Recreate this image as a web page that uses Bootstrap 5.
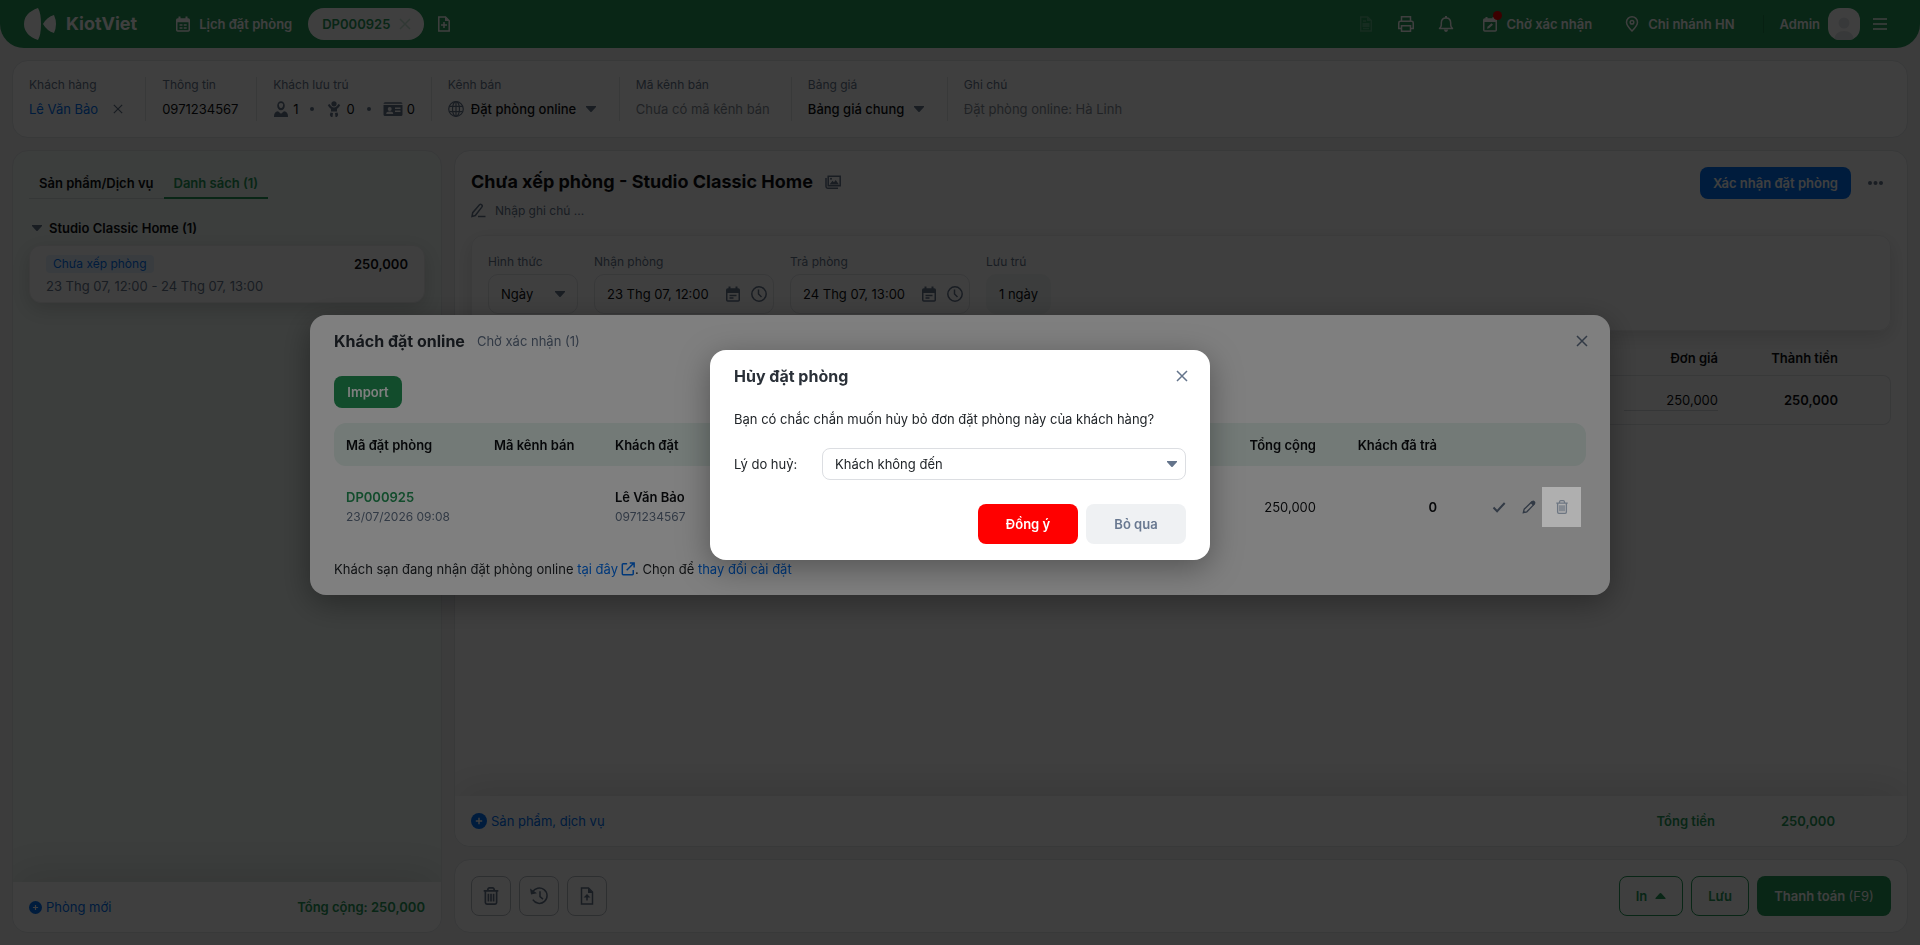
<!DOCTYPE html>
<html lang="vi">
<head>
<meta charset="utf-8">
<meta name="viewport" content="width=device-width, initial-scale=1">
<title>KiotViet - Lịch đặt phòng</title>
<link href="https://cdn.jsdelivr.net/npm/bootstrap@5.3.0/dist/css/bootstrap.min.css" rel="stylesheet">
<style>
:root{--kv-green:#249858;--kv-blue:#0070f4;--kv-gray:#64748b;--kv-line:#e2e4e7}
body{font-family:Inter,"Noto Sans",sans-serif;font-size:13px;line-height:20px;color:#0d0f12;background:#f0f1f2;min-height:100vh}
button,input,select{font:inherit;color:inherit}
svg{fill:none;stroke:currentColor;stroke-width:1.5;flex:none;display:block}
a{text-decoration:none;color:var(--kv-blue)}
.plain{border:0;background:none;padding:0}
.ic10{width:10px;height:10px}.ic12{width:12px;height:12px}.ic14{width:14px;height:14px}.ic16{width:16px;height:16px}.ic20{width:20px;height:20px}
.solid{fill:currentColor;stroke:none}
.semi{font-weight:600}.medium{font-weight:500}
.muted{color:var(--kv-gray)}
.small12{font-size:12px;line-height:16px}
.green{color:var(--kv-green)}
/* top bar */
.topbar{height:48px;background:var(--kv-green);border-radius:0 0 24px 24px;color:#fff;padding:0 32px 0 24px}
.brand-link{margin-right:34px}
.brand-word{font-size:18px;font-weight:700;color:#fff}
.pill{height:32px;border-radius:16px;background:#fff;color:var(--kv-green);padding:0 13px 0 14px;gap:9px}
.avatar{width:32px;height:32px;border-radius:12px;background:#fff;color:#e3e5e8;overflow:hidden}
.dot-alert{position:absolute;left:11px;top:-3px;width:9px;height:9px;border-radius:50%;background:#f00000}
.vline{width:1px;height:18px;background:#1c8048}
/* panels */
.board{padding:12px;gap:12px}
.gap12{gap:12px}
.panel{background:#fff;border:1px solid var(--kv-line);border-radius:16px;overflow:hidden}
.info-item{padding:0 16px;border-right:1px solid var(--kv-line);height:44px}
.info-item:last-child{border:0}
.info-phone{min-width:111px}
.info-item .val{height:24px;margin-top:4px}
.info-item label,.info-item .lbl{display:block;font-size:12px;line-height:16px;color:var(--kv-gray)}
.clear-x{margin:0 6px 0 15px}
.guests .muted{margin-right:4px}
.guests .dotsep{width:4px;height:4px;border-radius:50%;background:var(--kv-gray);margin:0 12px}
.pick{padding-right:7px;gap:7px}
.caret-select{appearance:none;border:0;background:transparent url("data:image/svg+xml,%3Csvg xmlns='http://www.w3.org/2000/svg' viewBox='0 0 10 6'%3E%3Cpath d='M0 0h10v1L5.700 5.700q-.7.600-1.400 0L0 1z' fill='%2364748b'/%3E%3C/svg%3E") no-repeat right center/10px 6px;padding:0 19px 0 0}
.ghost-input{border:0;background:none;padding:0;outline:0}
.ghost-input::placeholder{color:#828b96;opacity:1}
.channel-code{width:139px}
.side{flex:0 0 430px;background:#f1f9f5}
.side-tabs button{height:32px;padding:1px 10px 0;border-bottom:1px solid #d7dcdc;font-weight:600}
.side-tabs button.active{border-bottom:2px solid var(--kv-green);color:var(--kv-green);padding-top:2px}
.group-head{margin:19px 0 7px;gap:7px;padding-left:3px}
.room-card{background:#fff;border:1px solid #eceeef;border-radius:12px;padding:8px 16px;box-shadow:0 6px 20px rgba(0,0,0,.16)}
.room-tag{background:#e6f1fe;color:var(--kv-blue);border-radius:4px;font-size:12px;line-height:18px;padding:0 7px}
.foot{height:50px;background:#fff;box-shadow:0 -10px 40px rgba(0,0,0,.12)}
.foot-sum{padding-right:72px}
.sum-value{width:120px;text-align:right}
.kbtn{border-radius:8px;font-weight:600;line-height:20px;padding:0 12px;height:32px;display:inline-flex;align-items:center;justify-content:center;border:1px solid transparent}
.kbtn-lg{height:40px}
.kbtn-blue{background:var(--kv-blue);color:#fff}
.kbtn-green{background:var(--kv-green);color:#fff}
.kbtn-line{background:#fff;color:var(--kv-green);border-color:var(--kv-green)}
.kbtn-icon{width:40px;padding:0;border-color:#b7bcc3;color:var(--kv-gray);background:#fff}
.w-print{width:64px;gap:8px}.w-save{width:58px}.w-pay{width:134px}.w-import{width:68px}
.page-title{font-size:18px;line-height:28px;font-weight:700;margin:0}
.title-row{padding-top:1px}
.note-row{height:24px;gap:8px;margin-top:3px}
.stay-card{border:1px solid #eceeef;border-radius:12px;padding:16px;gap:16px;margin-top:12px;box-shadow:0 6px 20px rgba(0,0,0,.14)}
.stay-card .cap{display:block;font-size:12px;line-height:16px;color:var(--kv-gray);padding-top:2px;margin-bottom:4px}
.field{height:40px;border:1px solid var(--kv-line);border-radius:10px;padding:0 12px}
.field.dated{padding-right:6px}
.field.dated .ghost-input{width:118px}
.field.dated .plain + .plain{margin-left:10px}
.field .caret-select{width:64px}
.nights{background:#f2f6f4;border-color:#f2f6f4}
.lines{border-collapse:separate;border-spacing:0;width:100%;margin-top:12px}
.lines th{height:32px;font-weight:600;padding:0 16px 2px;text-align:right}
.lines td{height:50px;padding:0 16px;text-align:right;border:solid var(--kv-line);border-width:1px 0}
.lines td:first-child{border-left-width:1px;border-radius:8px 0 0 8px}
.lines td:last-child{border-right-width:1px;border-radius:0 8px 8px 0}
.col-price{width:126px}.col-total{width:120px}.col-end{width:37px}
.price-in{width:94px;text-align:right;border:0;border-bottom:1px solid #d5d8dc;background:none;padding:0}
/* dialogs */
.modal{display:block;padding-bottom:36px}
.modal-backdrop{--bs-backdrop-opacity:.5}
.modal-content{border:0;border-radius:16px;color:#212529;box-shadow:0 8px 32px rgba(0,0,0,.35)}
.dlg-wide{max-width:1300px}
.dlg-head{height:52px;gap:12px}
.dlg-head .plain{margin:0 -2px 0 auto;color:var(--kv-gray)}
.dlg-title{font-size:16px;line-height:24px;font-weight:700;margin:0;color:#2a3038}
.toolbar-row{margin:9px 0 15px}
.bookings{width:100%;border-collapse:separate;border-spacing:0;table-layout:fixed;color:#0d0f12}
.bookings th{height:43px;background:#e6f4ee;font-weight:600;padding:2px 12px 0}
.bookings th:first-child{border-radius:12px 0 0 12px}
.bookings th:last-child{border-radius:0 12px 12px 0}
.bookings td{height:82px;padding:0 12px;vertical-align:middle}
.bookings td.acts{padding:0 5px 0 0}
.bookings .sub{font-size:12px;line-height:20px;color:var(--kv-gray)}
.c-code{width:148px}.c-chan{width:121px}.c-sum{width:120px}.c-paid{width:121px}.c-act{width:137px}
.act{display:flex;align-items:center;justify-content:center;color:var(--kv-gray);width:26px;height:40px}
.act-focus{position:relative;z-index:1051;width:39px;background:#afafaf;color:#6d7682}
.hint{height:20px;margin:11px 0 16px;white-space:pre}
.hint .out{gap:3px}
.ask{margin:7px 0 19px}
.reason{flex:1;height:32px;border:1px solid #dcdee2;border-radius:8px;padding-left:12px;background-position:right 8px center;color:#212529}
.reason-label{width:88px}
.dlg-foot{margin:24px 0 16px}
.kbtn-red{background:#f00;color:#fff;width:100px}
.kbtn-soft{background:#eff1f3;color:#687890;width:100px}
</style>
</head>
<body class="d-flex flex-column modal-open">

<svg class="d-none" aria-hidden="true">
  <symbol id="i-x" viewBox="0 0 12 12"><path d="M1 1l10 10M11 1L1 11"/></symbol>
  <symbol id="i-cal" viewBox="0 0 16 16"><rect x="1.750" y="3" width="12.500" height="12" rx="1"/><path d="M2 3h12v3.200H2zM3.500.5h2V4h-2zM10.500.5h2V4h-2z" class="solid"/><path d="M4.500 9h3M8.700 9h3M4.500 12h3M8.700 12h3"/></symbol>
  <symbol id="i-caldate" viewBox="0 0 16 16"><rect x="1.750" y="3" width="12.500" height="12" rx="1"/><path d="M2 3h12v4H2zM3.500.5h2V4h-2zM10.500.5h2V4h-2z" class="solid"/><path d="M4.500 9.500h7M4.500 12h4"/></symbol>
  <symbol id="i-calpen" viewBox="0 0 16 16"><rect x="1.750" y="3" width="12.500" height="12" rx="1"/><path d="M2 3h12v3H2zM3.500 1h2v3h-2zM10.500 1h2v3h-2z" class="solid"/><path d="M5 12.800l.5-2 4-3.500L11 8.800l-4 3.500z" class="solid"/></symbol>
  <symbol id="i-fileplus" viewBox="0 0 16 16"><path d="M3 1h6.500L13.200 4.700V15H2.800V1zM8 6v6M5 9h6"/><path d="M9 1v4h4z" class="solid"/></symbol>
  <symbol id="i-fileup" viewBox="0 0 20 20"><path d="M4.500 2h7l4 4v12h-11zM10 14.500V10"/><path d="M11 2v5h5zM6.500 11.500L10 8l3.500 3.500z" class="solid"/></symbol>
  <symbol id="i-doc" viewBox="0 0 16 16"><path d="M2.700 1h7l3.600 3.600V15H2.700zM5 5h3M5 12.500h6"/><path d="M9 1v4h4zM4.500 7h7v4h-7z" class="solid"/></symbol>
  <symbol id="i-print" viewBox="0 0 16 16"><path d="M3.500 5V.75h9V5M3.500 12.500H.75V7q0-1.700 1.700-1.700h11.100q1.700 0 1.700 1.700v5.500H12.500M3.500 9.800h9v5.450h-9z"/></symbol>
  <symbol id="i-bell" viewBox="0 0 16 16"><path d="M1.500 12.500q1.800-1.700 1.800-3.500V7Q3.300 2 8 2t4.700 5v2q0 1.800 1.800 3.500z" stroke-linejoin="round"/><path d="M7 0h2v2H7zM5.800 13.500h4.400Q9.500 16 8 16t-2.200-2.500z" class="solid"/></symbol>
  <symbol id="i-pin" viewBox="0 0 16 16"><path d="M8 15Q2.500 9.500 2.500 6.200a5.500 5.400 0 0111 0Q13.500 9.500 8 15z"/><circle cx="8" cy="6.200" r="1.800"/></symbol>
  <symbol id="i-person" viewBox="0 0 16 16"><path d="M8 .2a3.700 4.400 0 100 9 3.700 4.400 0 000-9zm0 1.800q2 0 2.200 1.500l-.4 2Q9.300 7 8 7T6.200 5.500L5.800 3.500Q6 2 8 2z" fill-rule="evenodd" class="solid"/><path d="M1 16q-.3-5 4-5.700L8 12.800l3-2.500q4.300.7 4 5.700z" class="solid"/></symbol>
  <symbol id="i-baby" viewBox="0 0 16 16"><circle cx="8" cy="2.800" r="2.600" class="solid"/><path d="M2.700 3.500q2 4 5.300 4t5.300-4" stroke-width="2.200"/><path d="M5 7h6v3.500H5zM4.500 11.500L7 12l-.5 4H5q-2-2.200-.5-4.500zM11.500 11.500L9 12l.5 4H11q2-2.200.5-4.500z" class="solid"/></symbol>
  <symbol id="i-id" viewBox="0 0 20 16"><path d="M2 1.200h16q1.500 0 1.500 1.500H.5Q.5 1.200 2 1.200zM.5 4h19v9.500q0 1.500-1.500 1.500H2Q.5 15 .5 13.500zm6.200 2a2 2 0 100 4 2 2 0 000-4zM3.200 13h7q0-2.400-3.500-2.400T3.200 13zM12 6.500V8h5.500V6.500zm0 3V11h5.500V9.500z" fill-rule="evenodd" class="solid"/></symbol>
  <symbol id="i-globe" viewBox="0 0 16 16"><g stroke-width="1.200"><circle cx="8" cy="8" r="7.300"/><ellipse cx="8" cy="8" rx="3.500" ry="7.300"/><path d="M1.500 5.300h13M1.500 10.700h13M8 .7v14.600"/></g></symbol>
  <symbol id="i-caret" viewBox="0 0 10 6"><path d="M0 0h10v1L5.700 5.700q-.7.600-1.400 0L0 1z" class="solid"/></symbol>
  <symbol id="i-plus" viewBox="0 0 16 16"><circle cx="8" cy="8" r="8" class="solid"/><path d="M8 4.800v6.400M4.800 8h6.400" stroke="#fff"/></symbol>
  <symbol id="i-images" viewBox="0 0 16 16"><path d="M3.200 2.200h12v9.600h-12zM1 4v8.500q0 1.700 1.700 1.700H13"/><path d="M4.500 10.500l3-3.700 1.500 1.500 1.700-2.300 3.300 4.500z" class="solid"/><circle cx="6" cy="4.800" r="1" class="solid"/></symbol>
  <symbol id="i-note" viewBox="0 0 16 16"><path d="M1 13.500l.7-3.800L8.500 1.800q1-1 2.200 0t.1 2.300L4.300 12.500z"/><path d="M7 13.500h7.500"/></symbol>
  <symbol id="i-clock" viewBox="0 0 16 16"><circle cx="8" cy="8" r="7.200"/><path d="M7.500 3.500V8l3 3"/></symbol>
  <symbol id="i-trash" viewBox="0 0 16 16"><path d="M1.500 3.500h13M3 3.500v10.300q0 1.400 1.400 1.400h7.200q1.400 0 1.400-1.400V3.500M5 3q.4-2.200 1.500-2.200h3Q10.600.8 11 3M5.700 6v6.800M8 6v6.800M10.300 6v6.800"/></symbol>
  <symbol id="i-history" viewBox="0 0 20 20"><path d="M3.500 6.200a7.700 7.700 0 1 1 .3 7.500M11 5.200v5.500l3 2.500"/><path d="M1 2.500l1 6 6-1.300z" class="solid"/></symbol>
  <symbol id="i-check" viewBox="0 0 14 14"><path d="M1.500 7.500l3.600 3.700L12.700 3" stroke-width="2"/></symbol>
  <symbol id="i-pencil" viewBox="0 0 16 16"><path d="M1.500 14.500l1-4 8.500-8.300 2.800 2.800-8.300 8.500z"/><path d="M9.500 3L12 .8q1.300-.6 2.500.7t.7 2.500L12.800 6.500zM1 15l.7-3 2.300 2.300z" class="solid"/></symbol>
  <symbol id="i-ext" viewBox="0 0 16 16"><path d="M7 2H2.500Q1.500 2 1.500 3v10.500q0 1 1 1H13q1 0 1-1V9M6.500 9.500L14.500 1.500M10 1.200h5v5" stroke-width="1.700"/></symbol>
</svg>

<header class="topbar d-flex align-items-center">
  <a href="#" class="brand-link d-flex align-items-center gap-2" aria-label="KiotViet">
    <svg class="text-white" width="34" height="32" viewBox="0 0 34 32"><path class="solid" d="M14 0q3 5 3 16t-3 16Q0 27 0 16T14 0zM30 7q-7 2-11 9 4 7 11 9 4-9 0-18z"/></svg>
    <span class="brand-word">KiotViet</span>
  </a>
  <a href="#" class="d-flex align-items-center gap-2 semi text-white"><svg class="ic16 ms-1"><use href="#i-cal"/></svg>Lịch đặt phòng</a>
  <div class="pill d-flex align-items-center semi ms-3"><span>DP000925</span><button class="plain opacity-25" aria-label="Đóng phiếu"><svg class="ic12"><use href="#i-x"/></svg></button></div>
  <button class="plain ms-2 ps-1" aria-label="Thêm phiếu"><svg class="ic16"><use href="#i-fileplus"/></svg></button>

  <div class="d-flex align-items-center ms-auto">
    <button class="plain me-4 opacity-25" aria-label="Chứng từ"><svg class="ic16"><use href="#i-doc"/></svg></button>
    <button class="plain me-4" aria-label="In"><svg class="ic16"><use href="#i-print"/></svg></button>
    <button class="plain me-4" aria-label="Thông báo"><svg class="ic16"><use href="#i-bell"/></svg></button>
    <button class="plain d-flex align-items-center gap-2 semi ms-1 me-4 position-relative"><svg class="ic16"><use href="#i-calpen"/></svg>Chờ xác nhận<span class="dot-alert"></span></button>
    <button class="plain d-flex align-items-center gap-2 semi ms-2 me-4"><svg class="ic16"><use href="#i-pin"/></svg>Chi nhánh HN</button>
    <span class="vline me-3 ms-1"></span>
    <span class="semi me-2">Admin</span>
    <span class="avatar"><svg width="32" height="32" viewBox="0 0 32 32"><circle cx="16" cy="15" r="5.500" class="solid"/><path d="M6 32q1-9 10-9t10 9z" class="solid"/></svg></span>
    <button class="plain ms-2 ps-1" aria-label="Menu"><svg class="ic16" viewBox="0 0 16 16"><path d="M1 3h14M1 8h14M1 13h14"/></svg></button>
  </div>
</header>

<main class="board d-flex flex-column flex-grow-1">
  <section class="panel d-flex py-3">
    <div class="info-item"><span class="lbl">Khách hàng</span>
      <div class="val d-flex align-items-center"><a href="#">Lê Văn Bảo</a><button class="plain muted clear-x" aria-label="Bỏ khách hàng"><svg class="ic10"><use href="#i-x"/></svg></button></div></div>
    <div class="info-item info-phone"><span class="lbl">Thông tin</span><div class="val d-flex align-items-center">0971234567</div></div>
    <div class="info-item"><span class="lbl">Khách lưu trú</span>
      <div class="val guests d-flex align-items-center"><svg class="ic16 muted"><use href="#i-person"/></svg>1<span class="dotsep"></span><svg class="ic16 muted"><use href="#i-baby"/></svg>0<span class="dotsep"></span><svg width="20" height="16" class="muted"><use href="#i-id"/></svg>0</div></div>
    <div class="info-item"><label for="channel">Kênh bán</label>
      <div class="val pick d-flex align-items-center"><svg class="ic16 muted"><use href="#i-globe"/></svg><select id="channel" class="caret-select medium"><option>Đặt phòng online</option></select></div></div>
    <div class="info-item"><label for="chcode">Mã kênh bán</label>
      <div class="val d-flex align-items-center"><input id="chcode" class="ghost-input channel-code" placeholder="Chưa có mã kênh bán"></div></div>
    <div class="info-item"><label for="pricebook">Bảng giá</label>
      <div class="val pick d-flex align-items-center"><select id="pricebook" class="caret-select medium"><option>Bảng giá chung</option></select></div></div>
    <div class="info-item flex-grow-1"><label for="note">Ghi chú</label>
      <div class="val d-flex align-items-center"><input id="note" class="ghost-input w-100" placeholder="Đặt phòng online: Hà Linh"></div></div>
  </section>

  <div class="d-flex flex-grow-1 gap12">
    <aside class="panel side d-flex flex-column">
      <div class="p-3 flex-grow-1">
        <div class="side-tabs d-flex"><button class="border-top-0 border-start-0 border-end-0 bg-transparent">Sản phẩm/Dịch vụ</button><button class="active border-top-0 border-start-0 border-end-0 bg-transparent">Danh sách (1)</button></div>
        <div class="group-head d-flex align-items-center semi"><svg width="10" height="6" class="muted"><use href="#i-caret"/></svg>Studio Classic Home (1)</div>
        <div class="room-card">
          <div class="d-flex justify-content-between align-items-center"><span class="room-tag">Chưa xếp phòng</span><span class="semi">250,000</span></div>
          <div class="muted mt-1 lh-sm">23 Thg 07, 12:00 - 24 Thg 07, 13:00</div>
        </div>
      </div>
      <div class="foot d-flex align-items-center px-3">
        <a href="#" class="d-flex align-items-center gap-1"><svg width="13" height="13"><use href="#i-plus"/></svg>Phòng mới</a>
        <span class="ms-auto semi green">Tổng cộng: 250,000</span>
      </div>
    </aside>

    <div class="d-flex flex-column flex-grow-1 gap12">
      <section class="panel d-flex flex-column flex-grow-1">
        <div class="p-3 pb-0 flex-grow-1">
          <div class="d-flex">
            <div class="flex-grow-1">
              <div class="title-row d-flex align-items-center gap12"><h1 class="page-title">Chưa xếp phòng - Studio Classic Home</h1><svg class="ic16 muted"><use href="#i-images"/></svg></div>
              <div class="note-row d-flex align-items-center muted"><svg class="ic16"><use href="#i-note"/></svg><span class="small12">Nhập ghi chú ...</span></div>
            </div>
            <div class="d-flex align-items-center align-self-start">
              <button class="kbtn kbtn-blue">Xác nhận đặt phòng</button>
              <button class="plain muted ms-3 me-2" aria-label="Thêm"><svg class="ic16" viewBox="0 0 16 16"><g class="solid"><circle cx="3" cy="8" r="2"/><circle cx="8.500" cy="8" r="2"/><circle cx="14" cy="8" r="2"/></g></svg></button>
            </div>
          </div>
          <div class="stay-card d-flex">
            <div><label for="mode" class="cap">Hình thức</label><div class="field d-flex align-items-center"><select id="mode" class="caret-select"><option>Ngày</option></select></div></div>
            <div><label for="cin" class="cap">Nhận phòng</label><div class="field dated d-flex align-items-center"><input id="cin" class="ghost-input" value="23 Thg 07, 12:00"><button class="plain muted" aria-label="Chọn ngày"><svg class="ic16"><use href="#i-caldate"/></svg></button><button class="plain muted" aria-label="Chọn giờ"><svg class="ic16"><use href="#i-clock"/></svg></button></div></div>
            <div><label for="cout" class="cap">Trả phòng</label><div class="field dated d-flex align-items-center"><input id="cout" class="ghost-input" value="24 Thg 07, 13:00"><button class="plain muted" aria-label="Chọn ngày"><svg class="ic16"><use href="#i-caldate"/></svg></button><button class="plain muted" aria-label="Chọn giờ"><svg class="ic16"><use href="#i-clock"/></svg></button></div></div>
            <div><div class="cap">Lưu trú</div><div class="field nights d-flex align-items-center">1 ngày</div></div>
          </div>
          <table class="lines">
            <colgroup><col><col class="col-price"><col class="col-total"><col class="col-end"></colgroup>
            <thead><tr><th></th><th>Đơn giá</th><th>Thành tiền</th><th></th></tr></thead>
            <tbody><tr><td></td><td><input class="price-in" aria-label="Đơn giá" value="250,000"></td><td class="semi">250,000</td><td></td></tr></tbody>
          </table>
        </div>
        <div class="foot foot-sum d-flex align-items-center ps-3">
          <a href="#" class="d-flex align-items-center gap-1"><svg class="ic16"><use href="#i-plus"/></svg>Sản phẩm, dịch vụ</a>
          <span class="ms-auto semi green">Tổng tiền</span><span class="semi green sum-value">250,000</span>
        </div>
      </section>
      <section class="panel d-flex p-3 gap-2">
        <button class="kbtn kbtn-lg kbtn-icon" aria-label="Xóa"><svg width="18" height="18"><use href="#i-trash"/></svg></button>
        <button class="kbtn kbtn-lg kbtn-icon" aria-label="Lịch sử"><svg class="ic20"><use href="#i-history"/></svg></button>
        <button class="kbtn kbtn-lg kbtn-icon" aria-label="Tải lên"><svg class="ic20"><use href="#i-fileup"/></svg></button>
        <button class="kbtn kbtn-lg kbtn-line w-print ms-auto">In<svg width="11" height="6" viewBox="0 0 10 6"><path d="M0 6h10V5L5.700.3Q5-.3 4.300.3L0 5z" class="solid"/></svg></button>
        <button class="kbtn kbtn-lg kbtn-line w-save">Lưu</button>
        <button class="kbtn kbtn-lg kbtn-green w-pay">Thanh toán&nbsp;<span class="fw-normal">(F9)</span></button>
      </section>
    </div>
  </div>
</main>

<div class="modal-backdrop show"></div>
<div class="modal show" role="dialog" aria-labelledby="t1">
  <div class="modal-dialog modal-dialog-centered dlg-wide">
    <div class="modal-content px-4">
      <div class="dlg-head d-flex align-items-center"><h2 class="dlg-title" id="t1">Khách đặt online</h2><span class="muted">Chờ xác nhận (1)</span><button class="plain" aria-label="Đóng"><svg class="ic12"><use href="#i-x"/></svg></button></div>
      <div class="toolbar-row"><button class="kbtn kbtn-green w-import">Import</button></div>
      <table class="bookings">
        <colgroup><col class="c-code"><col class="c-chan"><col><col class="c-sum"><col class="c-paid"><col class="c-act"></colgroup>
        <thead><tr><th>Mã đặt phòng</th><th>Mã kênh bán</th><th>Khách đặt</th><th class="text-end">Tổng cộng</th><th class="text-end">Khách đã trả</th><th></th></tr></thead>
        <tbody><tr>
          <td><a href="#" class="semi green">DP000925</a><div class="sub">23/07/2026 09:08</div></td>
          <td></td>
          <td><div class="semi">Lê Văn Bảo</div><div class="sub">0971234567</div></td>
          <td class="text-end">250,000</td>
          <td class="text-end semi">0</td>
          <td class="acts"><div class="d-flex justify-content-end">
            <button class="plain act me-1" aria-label="Xác nhận"><svg class="ic14"><use href="#i-check"/></svg></button>
            <button class="plain act" aria-label="Sửa"><svg class="ic14"><use href="#i-pencil"/></svg></button>
            <button class="plain act act-focus" aria-label="Hủy"><svg class="ic14"><use href="#i-trash"/></svg></button>
          </div></td>
        </tr></tbody>
      </table>
      <div class="hint d-flex align-items-center">Khách sạn đang nhận đặt phòng online <a href="#" class="out d-inline-flex align-items-center">tại đây<svg class="ic14"><use href="#i-ext"/></svg></a>. Chọn để <a href="#">thay đổi cài đặt</a></div>
    </div>
  </div>

  <div class="modal-backdrop show"></div>
  <div class="modal show" role="dialog" aria-labelledby="t2">
    <div class="modal-dialog modal-dialog-centered">
      <div class="modal-content px-4">
        <div class="dlg-head d-flex align-items-center"><h2 class="dlg-title" id="t2">Hủy đặt phòng</h2><button class="plain" aria-label="Đóng"><svg class="ic12"><use href="#i-x"/></svg></button></div>
        <p class="ask">Bạn có chắc chắn muốn hủy bỏ đơn đặt phòng này của khách hàng?</p>
        <div class="d-flex align-items-center"><label for="reason" class="reason-label">Lý do huỷ:</label>
          <select id="reason" class="caret-select reason"><option>Khách không đến</option></select></div>
        <div class="dlg-foot d-flex justify-content-end gap-2"><button class="kbtn kbtn-lg kbtn-red">Đồng ý</button><button class="kbtn kbtn-lg kbtn-soft">Bỏ qua</button></div>
      </div>
    </div>
  </div>
</div>
<script src="https://cdn.jsdelivr.net/npm/bootstrap@5.3.0/dist/js/bootstrap.bundle.min.js"></script>
</body>
</html>
